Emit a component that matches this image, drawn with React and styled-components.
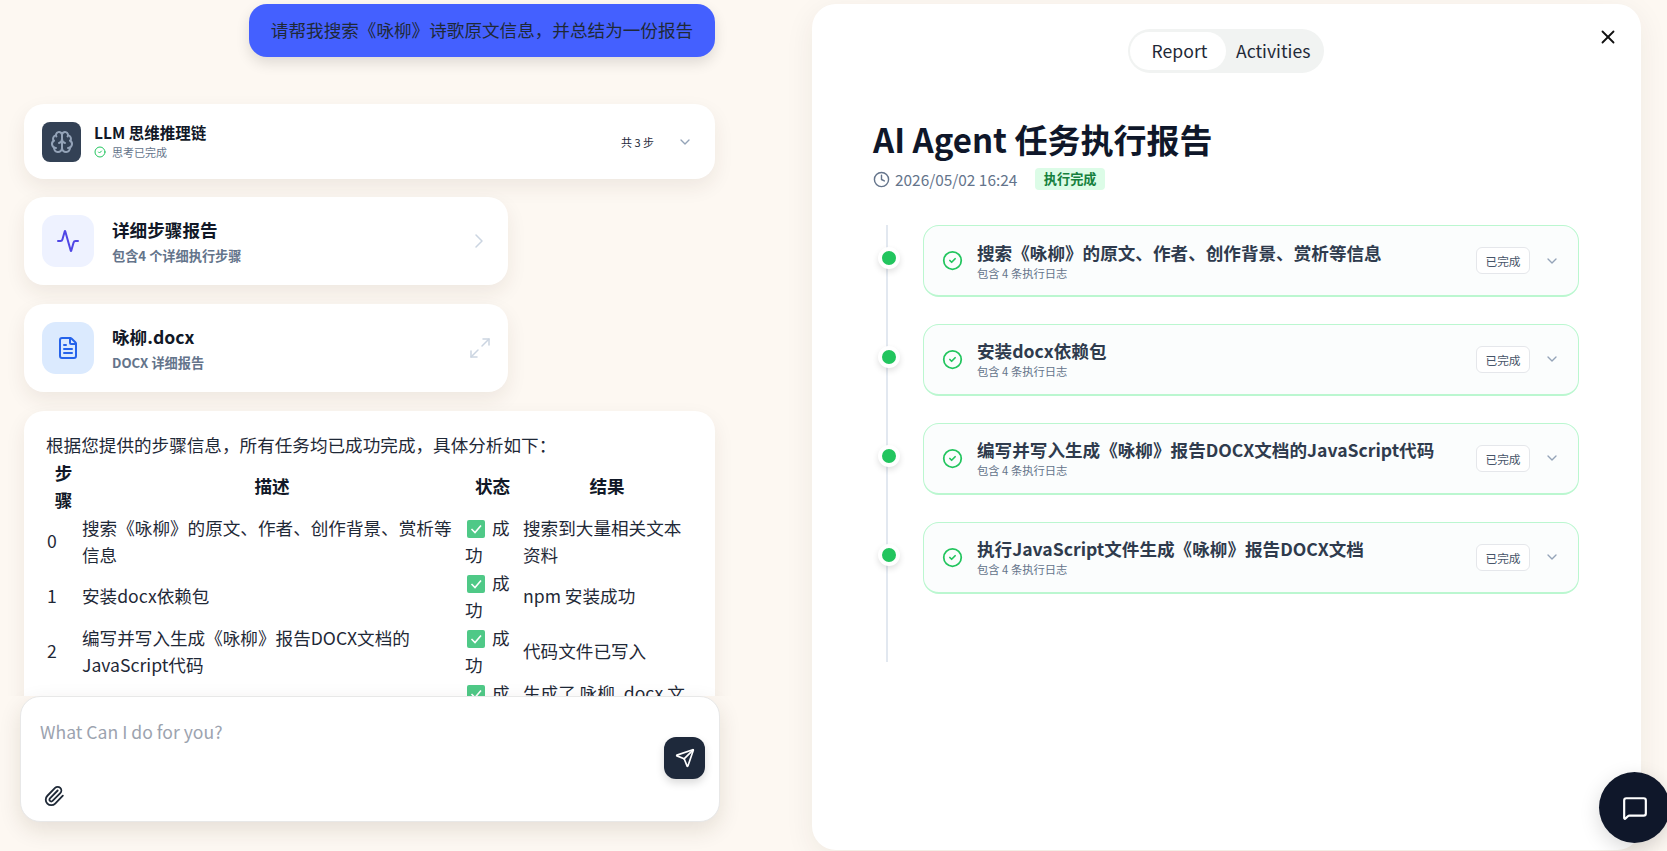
import React from "react";
import styled, { createGlobalStyle } from "styled-components";
import {
  Activity,
  Brain,
  ChevronDown,
  ChevronRight,
  CircleCheck,
  Clock,
  FileText,
  Maximize2,
  MessageSquare,
  Paperclip,
  Send,
  X,
} from "lucide-react";

const Global = createGlobalStyle`
  html, body { margin: 0; padding: 0; height: 100%; overflow: hidden; background: #fdf8f2; }
  body { font-family: "Noto Sans CJK SC", "Noto Sans", sans-serif; color: #111827; }
  * { box-sizing: border-box; }
`;

const Page = styled.div`
  display: grid;
  grid-template-columns: 740px 1fr;
  height: 100vh;
  overflow: hidden;
`;

const LeftColumn = styled.section`
  display: flex;
  flex-direction: column;
  height: 851px;
`;

const Conversation = styled.div`
  flex: 1;
  min-height: 0;
  overflow: hidden;
  padding: 4px 25px 0 24px;
  display: flex;
  flex-direction: column;
`;

const UserBubble = styled.div`
  align-self: flex-end;
  width: 466px;
  height: 53px;
  flex: none;
  display: flex;
  align-items: center;
  justify-content: center;
  padding-bottom: 3px;
  background: #4460ff;
  border-radius: 18px;
  font-size: 17.6px;
  color: #1f2937;
  box-shadow: 0 6px 14px rgba(0, 0, 0, 0.12);
  margin-bottom: 47px;
`;

const Card = styled.div`
  flex: none;
  background: #fff;
  border-radius: 20px;
  box-shadow: 0 8px 20px rgba(60, 40, 20, 0.08);
`;

const ThinkingCard = styled(Card)`
  height: 75px;
  display: flex;
  align-items: center;
  padding: 0 22px 0 18px;
  margin-bottom: 18px;
`;

const BrainBox = styled.div`
  width: 39px;
  height: 40px;
  border-radius: 8px;
  background: #334155;
  color: #94a3b8;
  display: flex;
  align-items: center;
  justify-content: center;
  margin-right: 13px;
`;

const ThinkingText = styled.div`
  flex: 1;
  display: flex;
  flex-direction: column;
`;

const ThinkingTitle = styled.div`
  font-size: 15.5px;
  line-height: 20px;
  font-weight: 700;
  color: #111827;
`;

const ThinkingSub = styled.div`
  display: flex;
  align-items: center;
  gap: 6px;
  margin-top: 1.5px;
  font-size: 11px;
  line-height: 17px;
  color: #64748b;
  svg { color: #22c55e; }
`;

const StepCount = styled.span`
  font-size: 11px;
  color: #1e293b;
  margin-right: 23px;
`;

const LinkCard = styled(Card)`
  width: 484px;
  height: 88px;
  display: flex;
  align-items: center;
  padding: 0 ${(p) => p.$right}px 0 18px;
  margin-bottom: 19px;
`;

const IconTile = styled.div`
  width: 52px;
  height: 52px;
  border-radius: 14px;
  background: ${(p) => p.$bg};
  color: ${(p) => p.$fg};
  display: flex;
  align-items: center;
  justify-content: center;
  margin-right: 18px;
`;

const LinkText = styled.div`
  flex: 1;
`;

const LinkTitle = styled.div`
  font-size: 17.6px;
  line-height: 26px;
  font-weight: 700;
  color: #111827;
`;

const LinkSub = styled.div`
  font-size: 13.2px;
  line-height: 20px;
  margin-top: 3px;
  font-weight: 700;
  color: #64748b;
`;

const TrailingIcon = styled.span`
  display: flex;
  color: #cbd5e1;
`;

const AnswerCard = styled(Card)`
  padding: 20px 22px 20px;
  font-size: 17.6px;
  line-height: 27.5px;
  color: #1f2937;
`;

const AnswerTable = styled.table`
  table-layout: fixed;
  width: 646px;
  border-collapse: collapse;
`;

const HeadCell = styled.th`
  padding: 0 8px;
  font-weight: 700;
  text-align: center;
  color: #111827;
  word-break: break-all;
`;

const BodyCell = styled.td`
  padding: 0 1px 0 ${(p) => p.$pad || 1}px;
  text-align: left;
  vertical-align: middle;
`;

const StatusMark = styled.svg`
  width: 18px;
  height: 18px;
  margin: 0 3px 0 2px;
  vertical-align: -3px;
`;

const Composer = styled.div`
  flex: none;
  margin: 0 20px 29px;
  height: 126px;
  background: #fff;
  border: 1px solid #e8e8e8;
  border-radius: 20px;
  box-shadow: 0 8px 22px rgba(60, 40, 20, 0.12);
  padding: 22px 14px 14px 19px;
  display: grid;
  grid-template-columns: 1fr 41px;
  grid-template-rows: 1fr 22px;
  row-gap: 6px;
`;

const Placeholder = styled.div`
  font-size: 17.6px;
  line-height: 26px;
  color: #9ca3af;
`;

const SendButton = styled.div`
  align-self: end;
  width: 41px;
  height: 42px;
  border-radius: 12px;
  background: #1e293b;
  color: #fff;
  display: flex;
  align-items: center;
  justify-content: center;
  box-shadow: 0 4px 8px rgba(0, 0, 0, 0.15);
`;

const AttachIcon = styled.span`
  display: flex;
  align-items: center;
  color: #1f2937;
  margin-left: 3px;
`;

const ReportPanel = styled.section`
  margin: 4px 26px 1px 72px;
  background: #fff;
  border-radius: 24px;
  box-shadow: 0 8px 30px rgba(60, 40, 20, 0.07);
  padding: 25px 62px 0 61px;
  position: relative;
  display: flex;
  flex-direction: column;
`;

const Tabs = styled.div`
  align-self: center;
  width: 196px;
  height: 44px;
  background: #f1f3f2;
  border-radius: 22px;
  padding: 3px 2px;
  display: flex;
  align-items: stretch;
`;

const Tab = styled.div`
  display: flex;
  align-items: center;
  justify-content: center;
  padding: ${(p) => (p.$active ? "0 0 1px 3px" : "0 0 1px")};
  font-size: 17.6px;
  color: #1f2937;
  border-radius: 19px;
  width: ${(p) => (p.$active ? "96px" : "auto")};
  margin-left: ${(p) => (p.$active ? "0" : "10px")};
  background: ${(p) => (p.$active ? "#fff" : "transparent")};
`;

const CloseButton = styled.div`
  position: absolute;
  top: 22px;
  right: 22px;
  display: flex;
  color: #111;
`;

const ReportTitle = styled.h1`
  margin: 44px 0 0;
  font-size: 33px;
  line-height: 44px;
  font-weight: 700;
  color: #0f172a;
`;

const MetaRow = styled.div`
  display: flex;
  align-items: center;
  margin-top: 7px;
  height: 22px;
  font-size: 15.4px;
  color: #64748b;
  gap: 5px;
`;

const DoneBadge = styled.span`
  margin-left: 13px;
  height: 22px;
  padding: 0 8.5px;
  border-radius: 4px;
  background: #dcfce7;
  color: #15803d;
  font-size: 13.2px;
  font-weight: 700;
  line-height: 22px;
`;

const Timeline = styled.div`
  position: relative;
  margin-top: 35px;
  padding: 0 0 68px 5px;
  display: flex;
  flex-direction: column;
  gap: 26.9px;
  &::before {
    content: "";
    position: absolute;
    left: 13px;
    top: 0;
    bottom: 0;
    width: 2px;
    background: #e2e8f0;
  }
`;

const StepRow = styled.div`
  display: flex;
  align-items: flex-start;
  gap: 23px;
  position: relative;
`;

const StepDot = styled.span`
  flex: none;
  width: 22px;
  height: 22px;
  margin-top: 22.4px;
  border-radius: 50%;
  background: #22c55e;
  border: 4px solid #fff;
  box-shadow: 0 3px 6px rgba(0, 0, 0, 0.12);
`;

const StepCard = styled.div`
  flex: 1;
  min-width: 0;
  height: 72px;
  border: 1.5px solid #bbf7d0;
  border-bottom-width: 2px;
  border-radius: 16px;
  background: #fbfdfd;
  display: flex;
  align-items: center;
  padding: 0 18px 0 18px;
  color: #22c55e;
`;

const StepText = styled.div`
  flex: 1;
  min-width: 0;
  margin-left: 14px;
`;

const StepTitle = styled.div`
  font-size: 17.6px;
  line-height: 24px;
  font-weight: 700;
  color: #2f3b4d;
  white-space: nowrap;
`;

const StepSub = styled.div`
  margin-top: 1px;
  font-size: 11.3px;
  line-height: 15px;
  color: #64748b;
`;

const StepBadge = styled.span`
  width: 54px;
  height: 27px;
  display: flex;
  align-items: center;
  justify-content: center;
  border: 1px solid #e5e7eb;
  border-radius: 6px;
  background: #fff;
  color: #475569;
  font-size: 11.7px;
  margin-right: 14px;
`;

const StepChevron = styled.span`
  display: flex;
  color: #94a3b8;
`;

const ChatFab = styled.div`
  position: fixed;
  left: 1599px;
  top: 772px;
  width: 71px;
  height: 71px;
  border-radius: 50%;
  background: #0f172a;
  color: #fff;
  display: flex;
  align-items: center;
  justify-content: center;
  box-shadow: 0 6px 20px rgba(0, 0, 0, 0.15);
`;

const Done = () => (
  <StatusMark viewBox="0 0 18 18" aria-label="✅">
    <rect width="18" height="18" rx="2" fill="#4fc987" />
    <path d="M4.5 9 8 12.5l6-7" fill="none" stroke="#fff" strokeWidth="1.6" />
  </StatusMark>
);

const rows = [
  ["0", "搜索《咏柳》的原文、作者、创作背景、赏析等信息", "搜索到大量相关文本资料"],
  ["1", "安装docx依赖包", "npm 安装成功"],
  ["2", "编写并写入生成《咏柳》报告DOCX文档的JavaScript代码", "代码文件已写入"],
  ["3", "执行JavaScript文件生成《咏柳》报告DOCX文档", "生成了 咏柳 .docx 文件"],
];

const steps = [
  "搜索《咏柳》的原文、作者、创作背景、赏析等信息",
  "安装docx依赖包",
  "编写并写入生成《咏柳》报告DOCX文档的JavaScript代码",
  "执行JavaScript文件生成《咏柳》报告DOCX文档",
];

export default function App() {
  return (
    <Page>
      <Global />
      <LeftColumn>
        <Conversation>
          <UserBubble>请帮我搜索《咏柳》诗歌原文信息，并总结为一份报告</UserBubble>
          <ThinkingCard>
            <BrainBox>
              <Brain size={24} strokeWidth={2} />
            </BrainBox>
            <ThinkingText>
              <ThinkingTitle>LLM 思维推理链</ThinkingTitle>
              <ThinkingSub>
                <CircleCheck size={12} strokeWidth={2} />
                思考已完成
              </ThinkingSub>
            </ThinkingText>
            <StepCount>共 3 步</StepCount>
            <StepChevron>
              <ChevronDown size={16} />
            </StepChevron>
          </ThinkingCard>
          <LinkCard $right={17}>
            <IconTile $bg="#eef2ff" $fg="#4f46e5">
              <Activity size={24} />
            </IconTile>
            <LinkText>
              <LinkTitle>详细步骤报告</LinkTitle>
              <LinkSub>包含4 个详细执行步骤</LinkSub>
            </LinkText>
            <TrailingIcon>
              <ChevronRight size={24} strokeWidth={1.5} />
            </TrailingIcon>
          </LinkCard>
          <LinkCard $right={16}>
            <IconTile $bg="#dbeafe" $fg="#2563eb">
              <FileText size={24} />
            </IconTile>
            <LinkText>
              <LinkTitle>咏柳.docx</LinkTitle>
              <LinkSub>DOCX 详细报告</LinkSub>
            </LinkText>
            <TrailingIcon>
              <Maximize2 size={24} strokeWidth={1.5} />
            </TrailingIcon>
          </LinkCard>
          <AnswerCard>
            <div>根据您提供的步骤信息，所有任务均已成功完成，具体分析如下：</div>
            <AnswerTable>
              <colgroup>
                <col style={{ width: 35 }} />
                <col style={{ width: 382 }} />
                <col style={{ width: 59 }} />
                <col style={{ width: 170 }} />
              </colgroup>
              <thead>
                <tr>
                  <HeadCell>步骤</HeadCell>
                  <HeadCell>描述</HeadCell>
                  <HeadCell>状态</HeadCell>
                  <HeadCell>结果</HeadCell>
                </tr>
              </thead>
              <tbody>
                {rows.map(([n, desc, result]) => (
                  <tr key={n}>
                    <BodyCell>{n}</BodyCell>
                    <BodyCell>{desc}</BodyCell>
                    <BodyCell $pad={2}>
                      <Done /> 成功
                    </BodyCell>
                    <BodyCell>{result}</BodyCell>
                  </tr>
                ))}
              </tbody>
            </AnswerTable>
          </AnswerCard>
        </Conversation>
        <Composer>
          <Placeholder>What Can I do for you?</Placeholder>
          <SendButton>
            <Send size={20} />
          </SendButton>
          <AttachIcon>
            <Paperclip size={22} />
          </AttachIcon>
        </Composer>
      </LeftColumn>
      <ReportPanel>
        <CloseButton>
          <X size={22} />
        </CloseButton>
        <Tabs>
          <Tab $active>Report</Tab>
          <Tab>Activities</Tab>
        </Tabs>
        <ReportTitle>AI Agent 任务执行报告</ReportTitle>
        <MetaRow>
          <Clock size={17} />
          2026/05/02 16:24
          <DoneBadge>执行完成</DoneBadge>
        </MetaRow>
        <Timeline>
          {steps.map((s) => (
            <StepRow key={s}>
              <StepDot />
              <StepCard>
                <CircleCheck size={21} strokeWidth={2} />
                <StepText>
                  <StepTitle>{s}</StepTitle>
                  <StepSub>包含 4 条执行日志</StepSub>
                </StepText>
                <StepBadge>已完成</StepBadge>
                <StepChevron>
                  <ChevronDown size={16} />
                </StepChevron>
              </StepCard>
            </StepRow>
          ))}
        </Timeline>
      </ReportPanel>
      <ChatFab>
        <MessageSquare size={26} />
      </ChatFab>
    </Page>
  );
}
